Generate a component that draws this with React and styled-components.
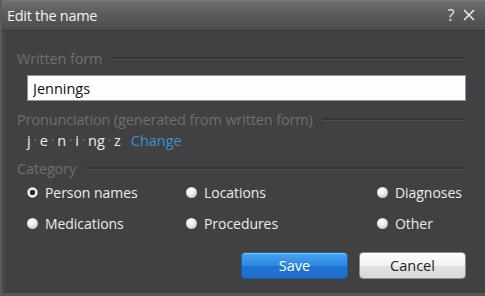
import React from "react";
import styled, { createGlobalStyle } from "styled-components";

const Global = createGlobalStyle`
  html, body { margin: 0; padding: 0; background: #414141; }
  body { font-family: "Open Sans", "Noto Sans", sans-serif; }
`;

const Dialog = styled.div`
  width: 485px;
  height: 296px;
  box-sizing: border-box;
  background: #414141;
  border-left: 2px solid #5a5a5a;
  border-bottom: 3px solid #575757;
  display: flex;
  flex-direction: column;
  overflow: hidden;
`;

const TitleBar = styled.div`
  height: 31px;
  box-sizing: border-box;
  display: flex;
  align-items: center;
  padding: 0 10px 0 5px;
  background: linear-gradient(#7a7a7a 0px, #6c6c6c 2px, #5c5c5c 14px, #4b4b4b 30px);
  border-bottom: 1px solid #383838;
  color: #f2f2f2;
  font-size: 14.5px;
  letter-spacing: -0.3px;
`;

const Title = styled.div`
  flex: 1;
`;

const TitleIcons = styled.div`
  display: flex;
  align-items: center;
  gap: 9px;
  color: #e8e8e8;
  font-size: 16px;
`;

const Body = styled.div`
  flex: 1;
  display: flex;
  flex-direction: column;
  padding: 17px 19px 0 12px;
  border-left: 3px solid #474747;
`;

const SectionHead = styled.div`
  display: flex;
  align-items: center;
  gap: 9px;
  height: 20px;
  margin-top: ${(p) => p.$mt || 0}px;
  color: #6f6f6f;
  font-size: 14.5px;
  letter-spacing: -0.15px;
`;

const Rule = styled.div`
  flex: 1;
  height: 0;
  border-top: 2px solid #353535;
  border-bottom: 1px solid #4f4f4f;
  margin-right: 1px;
`;

const Input = styled.input`
  margin: 7px 0 0 10px;
  height: 26px;
  box-sizing: border-box;
  border: 1px solid #8a98a8;
  background: #fdfeff;
  font-family: "Open Sans", "Noto Sans", sans-serif;
  font-size: 14.5px;
  color: #111;
  padding: 0 5px;
  outline: none;
`;

const Phonetic = styled.div`
  display: flex;
  align-items: center;
  margin: 1px 0 0 10px;
  height: 20px;
  color: #ececec;
  font-size: 14.5px;
`;

const Dot = styled.span`
  color: #8a8a8a;
  padding: 0 3px;
  font-size: 12px;
`;

const Link = styled.span`
  color: #3d8fd8;
  margin-left: 10px;
`;

const RadioGrid = styled.div`
  display: grid;
  grid-template-columns: 159px 191px auto;
  row-gap: 11px;
  margin: 4px 0 0 10px;
`;

const RadioItem = styled.div`
  display: flex;
  align-items: center;
  height: 20px;
  gap: 7px;
  color: #ececec;
  font-size: 14px;
  letter-spacing: -0.05px;
`;

const RadioBall = styled.span`
  width: 11px;
  height: 11px;
  border-radius: 50%;
  box-sizing: border-box;
  background: ${(p) =>
    p.$checked
      ? "radial-gradient(circle, #2a2a2a 0 2.5px, #f4f4f4 3px 100%)"
      : "radial-gradient(circle at 40% 35%, #ffffff 0, #f0f0f0 35%, #c4c4c4 80%, #9a9a9a 100%)"};
  border: ${(p) => (p.$checked ? "1px solid #bdbdbd" : "none")};
  box-shadow: 0 0 1px rgba(0, 0, 0, 0.5);
`;

const Buttons = styled.div`
  display: flex;
  justify-content: flex-end;
  gap: 11px;
  margin-top: 19px;
`;

const Button = styled.button`
  width: 107px;
  height: 27px;
  border-radius: 4px;
  font-family: "Open Sans", "Noto Sans", sans-serif;
  font-size: 14.5px;
  cursor: pointer;
  border: 1px solid ${(p) => (p.$primary ? "#1b5fa8" : "#8c8c8c")};
  color: ${(p) => (p.$primary ? "#ffffff" : "#1e1e1e")};
  background: ${(p) =>
    p.$primary
      ? "linear-gradient(#4aa5f0, #2d86e0 50%, #1f74d2 52%, #1e6fcb)"
      : "linear-gradient(#ffffff, #f1f1f1 50%, #e2e2e2 52%, #d8d8d8)"};
  box-shadow: inset 0 1px 0 rgba(255, 255, 255, 0.35);
  padding: 0;
`;

const radios = [
  ["Person names", true],
  ["Locations", false],
  ["Diagnoses", false],
  ["Medications", false],
  ["Procedures", false],
  ["Other", false],
];

export default function App() {
  const phon = ["j", "e", "n", "i", "ng", "z"];
  return (
    <>
      <Global />
      <Dialog>
        <TitleBar>
          <Title>Edit the name</Title>
          <TitleIcons>
            <span>?</span>
            <svg width="12" height="12" viewBox="0 0 12 12">
              <path d="M1 1 L11 11 M11 1 L1 11" stroke="#e8e8e8" strokeWidth="1.6" />
            </svg>
          </TitleIcons>
        </TitleBar>
        <Body>
          <SectionHead>
            <span>Written form</span>
            <Rule />
          </SectionHead>
          <Input defaultValue="Jennings" />
          <SectionHead $mt={8}>
            <span>Pronunciation (generated from written form)</span>
            <Rule />
          </SectionHead>
          <Phonetic>
            {phon.map((p, i) => (
              <React.Fragment key={i}>
                {i > 0 && <Dot>·</Dot>}
                <span>{p}</span>
              </React.Fragment>
            ))}
            <Link>Change</Link>
          </Phonetic>
          <SectionHead $mt={8}>
            <span>Category</span>
            <Rule />
          </SectionHead>
          <RadioGrid>
            {radios.map(([label, checked]) => (
              <RadioItem key={label}>
                <RadioBall $checked={checked} />
                <span>{label}</span>
              </RadioItem>
            ))}
          </RadioGrid>
          <Buttons>
            <Button $primary>Save</Button>
            <Button>Cancel</Button>
          </Buttons>
        </Body>
      </Dialog>
    </>
  );
}
